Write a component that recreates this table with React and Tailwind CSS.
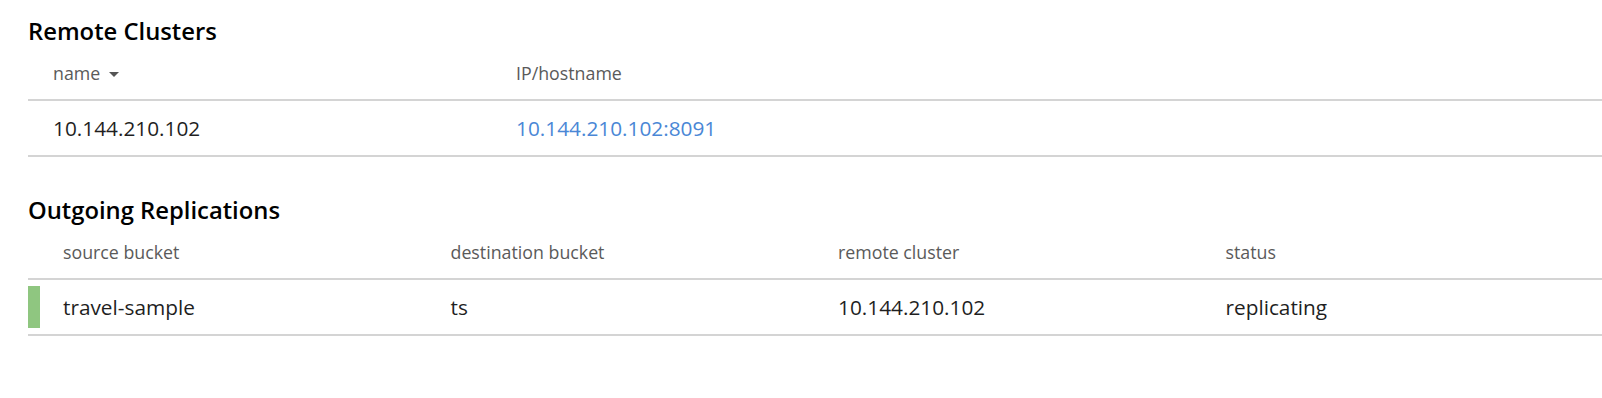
const clusters = [{ name: '10.144.210.102', host: '10.144.210.102:8091' }];

const replications = [
  { source: 'travel-sample', dest: 'ts', remote: '10.144.210.102', status: 'replicating' },
];

function SortCaret() {
  return (
    <svg width="10" height="5" viewBox="0 0 10 5" className="ml-[9px] mt-[2px]">
      <path d="M0 0 L10 0 L5 5 Z" fill="#555555" />
    </svg>
  );
}

export default function App() {
  return (
    <div
      className="min-h-[398px] bg-white pl-[28px] pt-[16px] text-[#1f1f1f]"
      style={{ fontFamily: '"Open Sans", "Noto Sans", sans-serif' }}
    >
      {/* Remote Clusters */}
      <h2 className="h-[30px] text-[23.8px] leading-[30px] font-semibold text-black">Remote Clusters</h2>
      <div className="flex border-b-2 border-[#d4d4d4] pt-[15px] pb-[14px] text-[17.8px] leading-[24px] text-[#5a5a5a]">
        <div className="flex w-[488px] items-center pl-[25px]">
          name
          <SortCaret />
        </div>
        <div>IP/hostname</div>
      </div>
      {clusters.map((c) => (
        <div key={c.name} className="flex h-[56px] items-center border-b-2 border-[#d4d4d4] text-[20.8px] leading-[28px]">
          <div className="w-[488px] pl-[25px]">{c.name}</div>
          <a className="text-[#4a87d6]">{c.host}</a>
        </div>
      ))}

      {/* Outgoing Replications */}
      <h2 className="mt-[38px] h-[30px] text-[23.8px] leading-[30px] font-semibold text-black">Outgoing Replications</h2>
      <div className="flex border-b-2 border-[#d4d4d4] pt-[15px] pb-[14px] text-[17.8px] leading-[24px] text-[#5a5a5a]">
        <div className="w-[12px]" />
        <div className="w-[387.5px] pl-[23px]">source bucket</div>
        <div className="w-[387.5px] pl-[23px]">destination bucket</div>
        <div className="w-[387.5px] pl-[23px]">remote cluster</div>
        <div className="pl-[23px]">status</div>
      </div>
      {replications.map((r) => (
        <div key={r.source} className="flex h-[56px] items-center border-b-2 border-[#d4d4d4] text-[20.8px] leading-[28px]">
          <div className="h-[42px] w-[12px] bg-[#8fc680]" />
          <div className="w-[387.5px] pl-[23px]">{r.source}</div>
          <div className="w-[387.5px] pl-[23px]">{r.dest}</div>
          <div className="w-[387.5px] pl-[23px]">{r.remote}</div>
          <div className="pl-[23px]">{r.status}</div>
        </div>
      ))}
    </div>
  );
}
